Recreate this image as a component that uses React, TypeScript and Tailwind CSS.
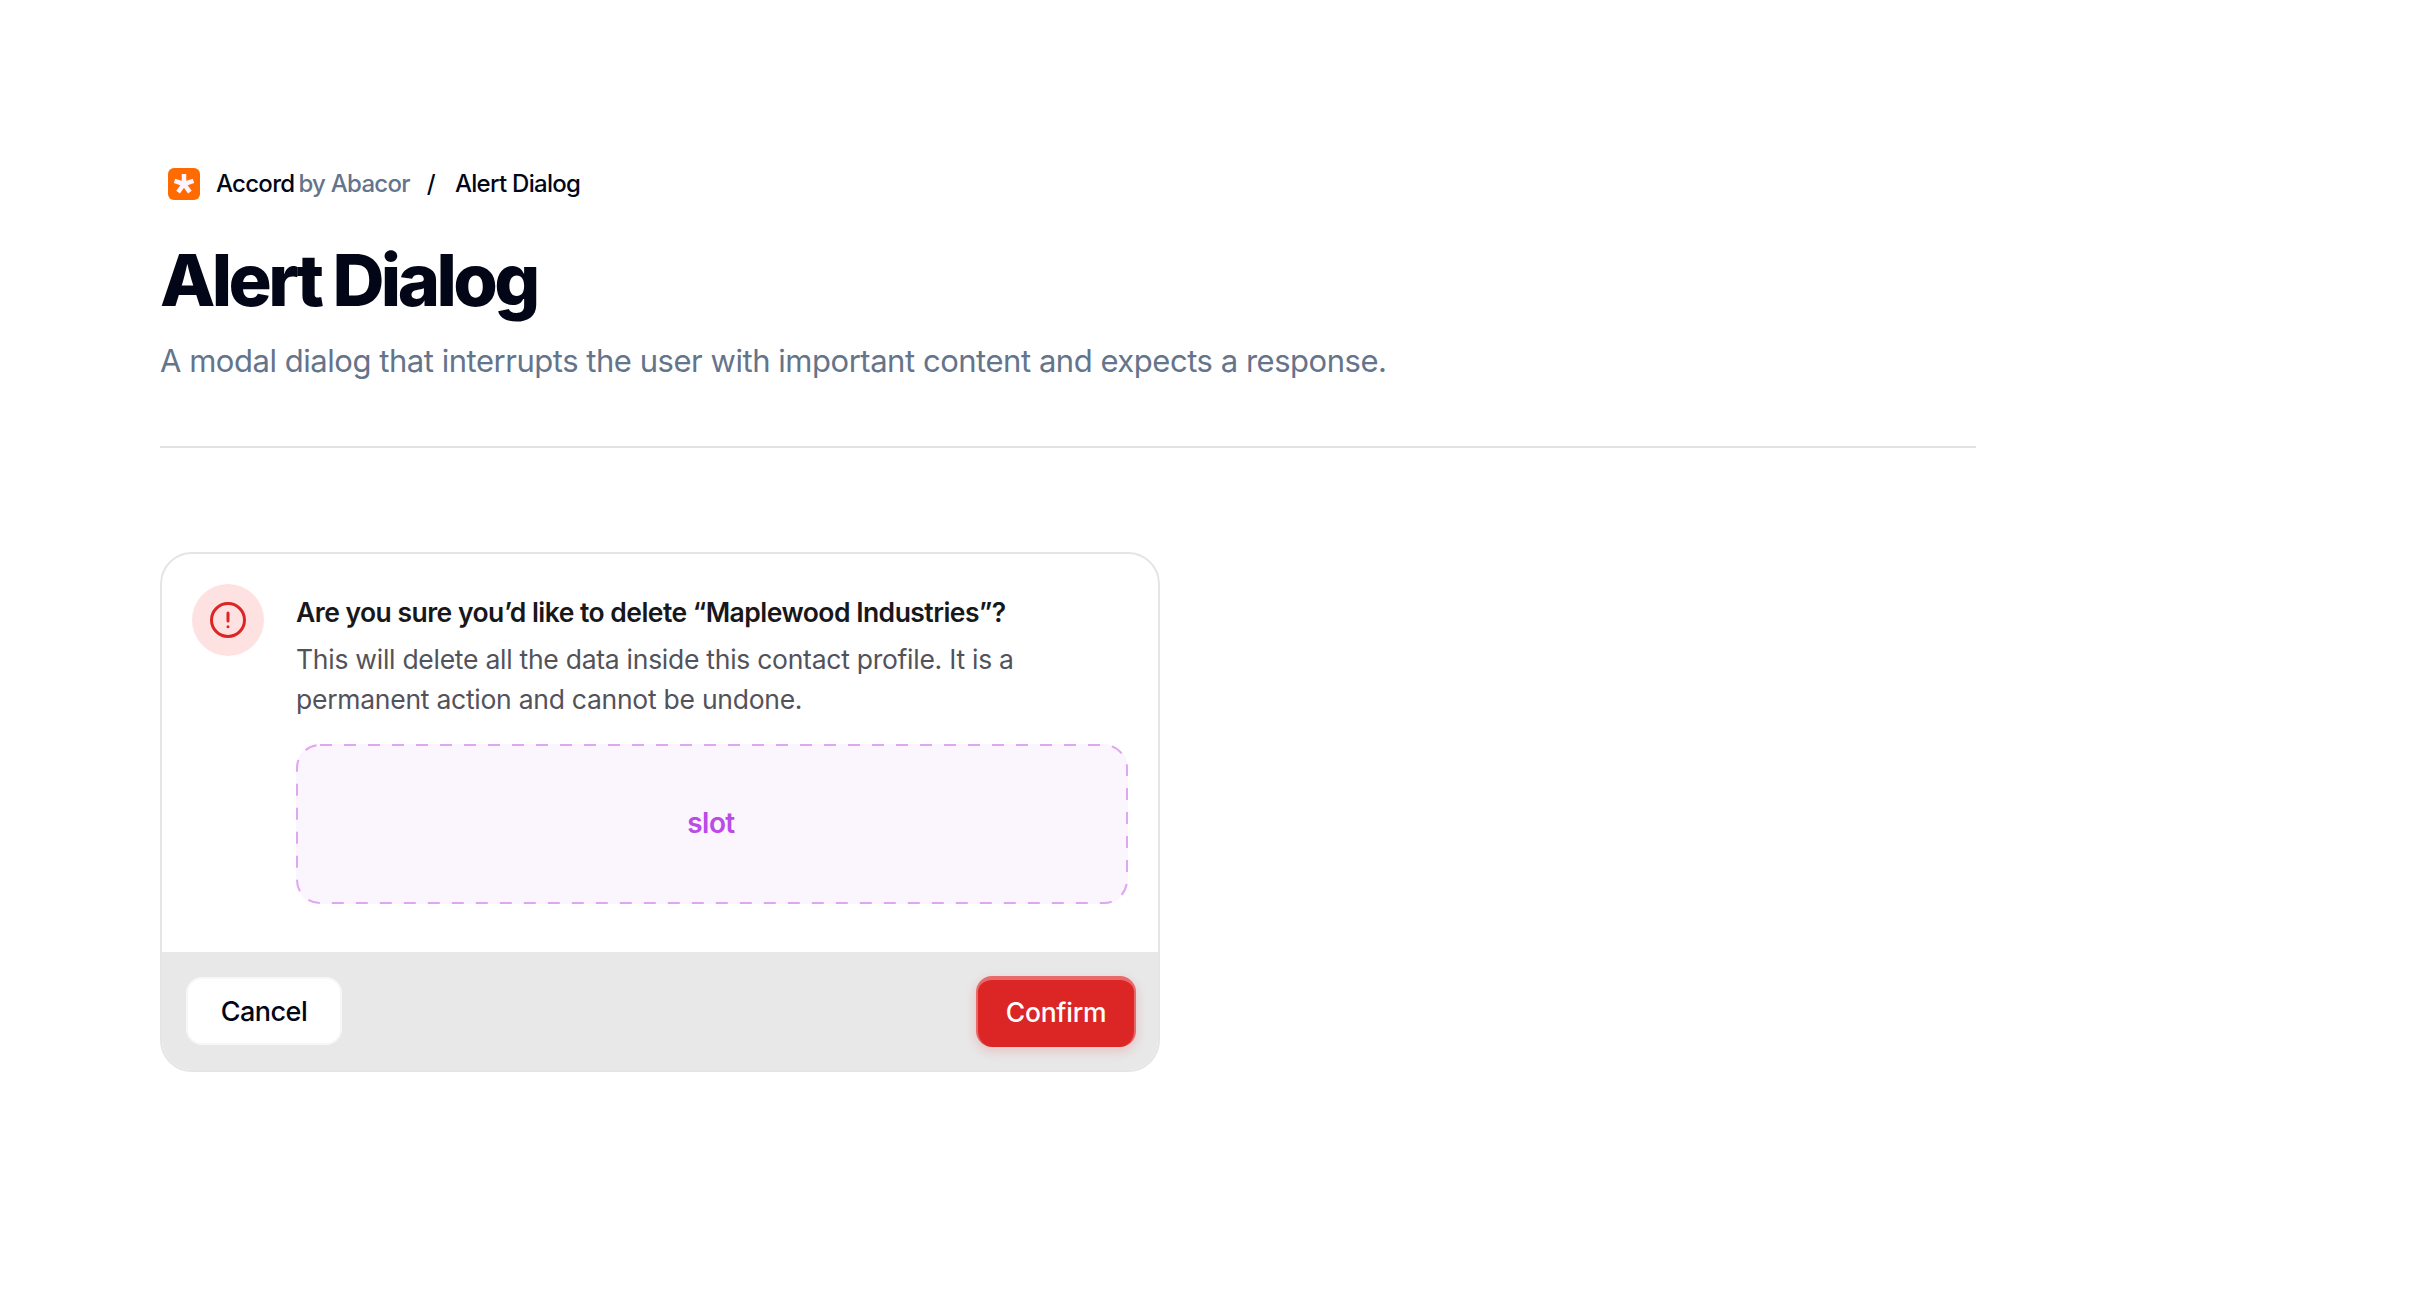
import React from "react";

const App = () => {
  return (
    <main className="min-h-screen bg-white pl-[160px] pt-[168px] font-['Inter',sans-serif]">
      <div className="w-[1816px]">
        <nav className="flex h-[32px] items-center text-[24px] tracking-[-0.03em] font-medium text-[#020617]">
          <svg width="32" height="32" viewBox="0 0 32 32" className="mr-[16px] ml-[8px]">
            <rect width="32" height="32" rx="6" fill="#ff6b00" />
            <path d="M16 16V6M16 16l9.5-3.1M16 16l5.9 8.1M16 16l-5.9 8.1M16 16L6.5 12.9" stroke="#fdf4ff" strokeWidth="4.5" />
          </svg>
          <span>Accord</span>
          <span className="ml-[4px] text-[#64748b]">by Abacor</span>
          <span className="ml-[17px] mr-[20px]">/</span>
          <span>Alert Dialog</span>
        </nav>
        <h1 className="mt-[36px] text-[72px] leading-[88px] font-extrabold tracking-[-0.05em] text-[#020617]">Alert Dialog</h1>
        <p className="mt-[13px] text-[31px] leading-[48px] text-[#64748b] tracking-[-0.015em]">
          A modal dialog that interrupts the user with important content and expects a response.
        </p>
        <hr className="mt-[61px] border-t-2 border-[#e2e2e2]" />
      </div>

      <section className="mt-[104px] w-[1000px] h-[520px] flex flex-col overflow-hidden rounded-[32px] border-2 border-[#e5e5e5] bg-white">
        <div className="flex flex-1 gap-[32px] pt-[30px] pl-[30px] pr-[30px]">
          <div className="flex size-[72px] shrink-0 items-center justify-center rounded-full bg-[#fee2e2]">
            <svg width="40" height="40" viewBox="0 0 40 40" fill="none" stroke="#dc2626" strokeLinecap="round">
              <circle cx="20" cy="20" r="16.5" strokeWidth="3" />
              <path d="M20 13v8" strokeWidth="3" />
              <path d="M20 26.7v.1" strokeWidth="3" />
            </svg>
          </div>
          <div className="flex-1">
            <h2 className="mt-[8px] text-[26.5px] leading-[40px] font-semibold tracking-[-0.02em] text-[#18181b]">
              Are you sure you’d like to delete “Maplewood Industries”?
            </h2>
            <p className="mt-[7px] text-[26.5px] leading-[40px] tracking-[-0.01em] text-[#52525b]">
              This will delete all the data inside this contact profile. It is a permanent action and cannot be undone.
            </p>
            <div className="relative mt-[25px] flex h-[160px] items-center justify-center bg-[#fbf6fe] rounded-[24px] pb-[2px] pr-[2px] text-[28px] font-semibold tracking-[-0.02em] text-[#bb4be6]">
              slot
              <svg width="832" height="160" className="absolute inset-0" fill="none">
                <rect x="1" y="1" width="830" height="158" rx="23" stroke="#dfa6f2" strokeWidth="2" strokeDasharray="12 12" />
              </svg>
            </div>
          </div>
        </div>
        <footer className="flex h-[118px] items-center justify-between bg-[#e8e8e8] pl-[24px] pr-[22px]">
          <button className="h-[68px] w-[156px] rounded-[16px] border-2 border-[#f7f7f7] bg-white pt-[2px] text-[27px] font-medium tracking-[-0.02em] text-[#020617]">
            Cancel
          </button>
          <button className="h-[71px] w-[160px] rounded-[16px] border-t-4 border-x-2 border-[#e86a6a] border-b-0 bg-[#dc2626] text-[26.5px] font-medium tracking-[-0.01em] text-white shadow-[0_4px_12px_rgba(220,38,38,0.2)]">
            Confirm
          </button>
        </footer>
      </section>
    </main>
  );
};

export default App;
